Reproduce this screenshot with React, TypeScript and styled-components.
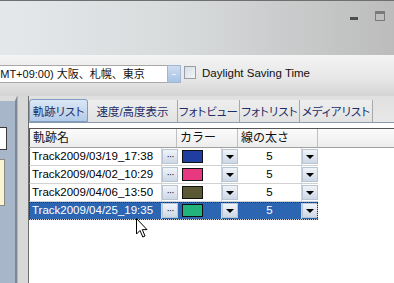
import React from 'react'
import styled, { createGlobalStyle } from 'styled-components'

const GlobalStyle = createGlobalStyle`
  html, body { margin: 0; padding: 0; width: 394px; height: 283px; overflow: hidden; }
  body { font-family: "Liberation Sans", "Noto Sans CJK JP", sans-serif; }
`

const Window = styled.div`
  position: relative;
  width: 394px;
  height: 283px;
  display: flex;
  flex-direction: column;
  overflow: hidden;
  background: #fff;
`

const TitleArea = styled.div`
  height: 55px;
  flex: none;
  box-sizing: border-box;
  border-top: 1px solid #6f6f6f;
  background: linear-gradient(90deg, #e4e8ea 0%, #d8dbdc 45%, #bcbcbc 100%);
  display: flex;
  justify-content: flex-end;
  align-items: flex-start;
  gap: 17px;
  padding: 10px 9px 0 0;
`

const MinButton = styled.div`
  width: 8px;
  height: 3px;
  margin-top: 6px;
  background: #4e4e4e;
`

const MaxButton = styled.div`
  width: 10px;
  height: 10px;
  box-sizing: border-box;
  border: 1px solid #7a7a7a;
  border-top-width: 3px;
`

const OptionBar = styled.div`
  height: 41px;
  flex: none;
  box-sizing: border-box;
  background: linear-gradient(180deg, #f4f4f4 0%, #e6e6e6 60%, #d4d4d4 100%);
  display: flex;
  align-items: flex-start;
  padding-top: 10px;
  font-size: 11.5px;
  color: #111;
`

const Combo = styled.div`
  margin-left: -20px;
  width: 187px;
  height: 18px;
  box-sizing: border-box;
  border: 1px solid #a8a8a8;
  border-right: none;
  background: #fff;
  padding-left: 7px;
  font-size: 11px;
  line-height: 16px;
  white-space: nowrap;
  overflow: hidden;
`

const ComboButton = styled.div`
  width: 14px;
  height: 18px;
  box-sizing: border-box;
  border: 1px solid #9fb6d4;
  background: linear-gradient(180deg, #cddcef 0%, #a9c3e4 100%);
  display: flex;
  align-items: center;
  justify-content: center;
  &::after {
    content: '';
    width: 4px;
    height: 1px;
    background: #e8f0fa;
  }
`

const CheckBox = styled.div`
  margin: 1px 0 0 3px;
  width: 12px;
  height: 13px;
  box-sizing: border-box;
  border: 1px solid #9a9ea4;
  background: linear-gradient(135deg, #d6dee8 0%, #f2f5f8 100%);
`

const CheckLabel = styled.span`
  margin-left: 6px;
  line-height: 16px;
`

const Body = styled.div`
  flex: 1;
  display: flex;
  min-height: 0;
`

const SidePanel = styled.div`
  width: 15px;
  flex: none;
  display: flex;
  flex-direction: column;
  background: #a8b6c9;
  border-top: 5px solid #dcdcdc;
  border-right: 2px solid #7e8896;
  padding-top: 26px;
  gap: 9px;
`

const WhiteBox = styled.div`
  width: 7px;
  height: 23px;
  box-sizing: border-box;
  background: #fff;
  border: 1px solid #3a3a3a;
  border-left: none;
`

const YellowBox = styled.div`
  width: 5px;
  height: 47px;
  box-sizing: border-box;
  background: #fbf4d2;
  border: 1px solid #8a8a80;
  border-left: none;
`

const Splitter = styled.div`
  width: 10px;
  flex: none;
  background: #d8d8d8;
  border-left: 1px solid #b4b4b4;
  border-right: 1px solid #6e6e6e;
`

const Main = styled.div`
  flex: 1;
  display: flex;
  flex-direction: column;
  min-width: 0;
`

const TabStrip = styled.div`
  height: 27px;
  flex: none;
  box-sizing: border-box;
  display: flex;
  align-items: flex-end;
  background: linear-gradient(180deg, #e0e0e0 0%, #e8e8e8 100%);
  border-bottom: 1px solid #8c9ab0;
`

const Tab = styled.div<{ $w: number; $active?: boolean }>`
  width: ${p => p.$w}px;
  height: ${p => (p.$active ? 23 : 22)}px;
  box-sizing: border-box;
  display: flex;
  align-items: center;
  justify-content: center;
  font-size: 11.5px;
  font-feature-settings: "palt";
  color: #1d2d68;
  white-space: nowrap;
  background: ${p =>
    p.$active
      ? 'linear-gradient(180deg, #dbe7f5 0%, #b3cbe8 100%)'
      : 'linear-gradient(180deg, #eeeeee 0%, #e2e2e2 100%)'};
  border: ${p => (p.$active ? '1px solid #7f9cc4' : 'none')};
  border-right: 1px solid ${p => (p.$active ? '#7f9cc4' : '#a8a8a8')};
  border-radius: ${p => (p.$active ? '3px 3px 0 0' : '0')};
`

const GridArea = styled.div`
  flex: 1;
  background: #fff;
  padding-top: 5px;
`

const HeaderRow = styled.div`
  display: flex;
  height: 20px;
  box-sizing: border-box;
  border-top: 1px solid #555;
  border-bottom: 1px solid #a0a0a0;
  background: linear-gradient(180deg, #fbfbfb 0%, #ededed 100%);
`

const HeaderCell = styled.div<{ $w?: number }>`
  ${p => (p.$w ? `width: ${p.$w}px; flex: none;` : 'flex: 1;')}
  box-sizing: border-box;
  border-right: 1px solid #c0c0c0;
  font-size: 12px;
  line-height: 18px;
  padding-left: 3px;
  color: #111;
  &:first-child { border-left: 1px solid #555; }
  &:last-child { border-right: none; }
`

const Row = styled.div<{ $selected?: boolean }>`
  display: flex;
  width: 289px;
  height: 18px;
  box-sizing: border-box;
  border-bottom: 1px solid #d2d2d2;
  border-left: 1px solid #555;
  background: ${p => (p.$selected ? '#2c66b3' : '#fff')};
  color: ${p => (p.$selected ? '#fff' : '#000')};
  outline: ${p => (p.$selected ? '1px dotted #333' : 'none')};
  outline-offset: -1px;
`

const Cell = styled.div<{ $w: number; $center?: boolean }>`
  width: ${p => p.$w}px;
  flex: none;
  box-sizing: border-box;
  border-right: 1px solid #d2d2d2;
  font-size: 11.5px;
  line-height: 17px;
  padding-left: ${p => (p.$center ? 0 : 2)}px;
  white-space: nowrap;
  overflow: hidden;
  display: flex;
  align-items: center;
  justify-content: ${p => (p.$center ? 'center' : 'flex-start')};
`

const CellButton = styled.div<{ $w: number }>`
  width: ${p => p.$w}px;
  flex: none;
  box-sizing: border-box;
  margin: 1px 0;
  border: 1px solid #b8c4d2;
  background: linear-gradient(180deg, #f0f4f9 0%, #cdd8e6 100%);
  display: flex;
  align-items: center;
  justify-content: center;
  font-size: 10px;
  color: #223;
  letter-spacing: -1px;
`

const Arrow = styled.div`
  width: 0;
  height: 0;
  border-left: 4px solid transparent;
  border-right: 4px solid transparent;
  border-top: 4px solid #000;
`

const Swatch = styled.div<{ $color: string }>`
  width: 21px;
  height: 13px;
  margin-left: 2px;
  box-sizing: border-box;
  border: 1px solid #111;
  background: ${p => p.$color};
`

const Cursor = styled.svg`
  position: absolute;
  left: 136px;
  top: 218px;
`

const tracks = [
  { name: 'Track2009/03/19_17:38', color: '#1f3ea0' },
  { name: 'Track2009/04/02_10:29', color: '#e8387f' },
  { name: 'Track2009/04/06_13:50', color: '#5a5934' },
  { name: 'Track2009/04/25_19:35', color: '#22b27c', selected: true },
]

const tabs = [
  { label: '軌跡リスト', w: 59, active: true },
  { label: '速度/高度表示', w: 90 },
  { label: 'フォトビュー', w: 62 },
  { label: 'フォトリスト', w: 60 },
  { label: 'メディアリスト', w: 73 },
]

export default function App() {
  return (
    <Window>
      <GlobalStyle />
      <TitleArea>
        <MinButton />
        <MaxButton />
      </TitleArea>
      <OptionBar>
        <Combo>(GMT+09:00) 大阪、札幌、東京</Combo>
        <ComboButton />
        <CheckBox />
        <CheckLabel>Daylight Saving Time</CheckLabel>
      </OptionBar>
      <Body>
        <SidePanel>
          <WhiteBox />
          <YellowBox />
        </SidePanel>
        <Splitter />
        <Main>
          <TabStrip>
            {tabs.map(t => (
              <Tab key={t.label} $w={t.w} $active={t.active}>{t.label}</Tab>
            ))}
          </TabStrip>
          <GridArea>
            <HeaderRow>
              <HeaderCell $w={148}>軌跡名</HeaderCell>
              <HeaderCell $w={61}>カラー</HeaderCell>
              <HeaderCell $w={80}>線の太さ</HeaderCell>
              <HeaderCell />
            </HeaderRow>
            {tracks.map(t => (
              <Row key={t.name} $selected={t.selected}>
                <Cell $w={132}>{t.name}</Cell>
                <CellButton $w={16}>···</CellButton>
                <Cell $w={44}><Swatch $color={t.color} /></Cell>
                <CellButton $w={16}><Arrow /></CellButton>
                <Cell $w={64} $center>5</Cell>
                <CellButton $w={16}><Arrow /></CellButton>
              </Row>
            ))}
          </GridArea>
        </Main>
      </Body>
      <Cursor width="12" height="20" viewBox="0 0 12 20">
        <path d="M0.5 0.5 L0.5 16 L4 12.5 L6.8 19 L9 18 L6.3 11.6 L11 11.6 Z" fill="#fff" stroke="#000" strokeWidth="1" />
      </Cursor>
    </Window>
  )
}
